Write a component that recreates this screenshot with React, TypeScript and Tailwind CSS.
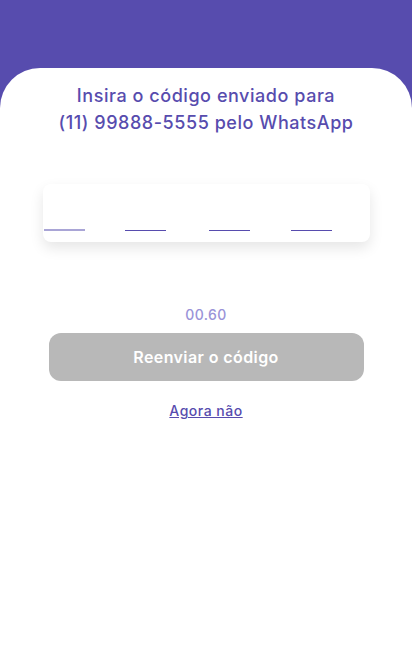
export default function App() {
  const digits = [0, 1, 2, 3];

  return (
    <div
      className="min-h-[667px] w-full bg-[#574cae]"
      style={{ fontFamily: 'Inter, "Noto Sans", sans-serif' }}
    >
      <div className="h-[68px]" />
      <div className="flex min-h-[599px] flex-col items-center rounded-t-[40px] bg-white pt-[14px]">
        <h1 className="text-center text-[18px] font-medium leading-[27px] tracking-[0.55px] text-[#574cae]">
          Insira o código enviado para
          <br />
          (11) 99888-5555 pelo WhatsApp
        </h1>

        {/* campos do código */}
        <div className="mt-[48px] flex h-[58px] w-[327px] items-end rounded-lg bg-white pb-[11px] shadow-[0_6px_14px_rgba(0,0,0,0.1)]">
          {digits.map((i) => (
            <div
              key={i}
              className={
                i === 0
                  ? 'ml-px h-[2px] w-[41px] bg-[#a9a5d6]'
                  : i === 1
                    ? 'ml-[40px] h-px w-[41px] bg-[#574cae]'
                    : i === 2
                      ? 'ml-[43px] h-px w-[41px] bg-[#574cae]'
                      : 'ml-[41px] h-px w-[41px] bg-[#574cae]'
              }
            />
          ))}
        </div>

        <p className="mt-[63px] text-[14px] font-medium leading-[20px] tracking-[0.4px] text-[#9a93d8]">00.60</p>

        <button
          type="button"
          disabled
          className="mt-[8px] h-[48px] w-[315px] rounded-xl bg-[#b8b8b8] text-[16px] font-semibold tracking-[0.4px] text-white"
        >
          Reenviar o código
        </button>

        <a
          href="#"
          className="mt-[20px] text-[14px] font-medium leading-[20px] tracking-[0.5px] text-[#574cae] underline"
        >
          Agora não
        </a>
      </div>
    </div>
  );
}
